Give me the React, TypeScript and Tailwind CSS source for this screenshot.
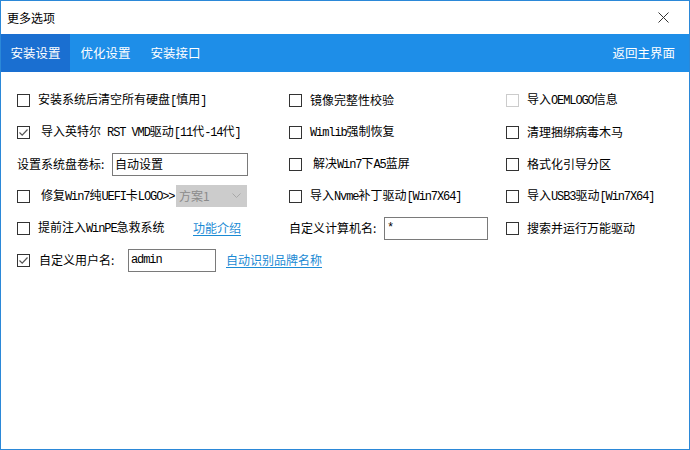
import type { ReactNode } from "react";

const FONT = "font-['Noto_Sans_CJK_SC','Noto_Sans',sans-serif]";

// latin runs in the original are half-width bitmap glyphs, ~6px per char
function T({ text }: { text: string }) {
  const parts = text.split(/([\x20-\x7E]+)/);
  return (
    <>
      {parts.map((p, i) =>
        /^[\x20-\x7E]+$/.test(p) ? (
          <span key={i} className="whitespace-pre font-['Liberation_Mono',monospace] text-[12px] tracking-[-1.1px]">
            {p}
          </span>
        ) : (
          <span key={i}>{p}</span>
        ),
      )}
    </>
  );
}

function Box({ checked = false, disabled = false }: { checked?: boolean; disabled?: boolean }) {
  return (
    <span
      className={`flex h-[13px] w-[13px] shrink-0 items-center justify-center border bg-white ${
        disabled ? "border-[#cccccc]" : "border-[#333333]"
      }`}
    >
      {checked && (
        <svg width="11" height="11" viewBox="0 0 11 11">
          <path d="M1.5 5.5 L4.2 8.2 L9.5 2.5" fill="none" stroke="#555" strokeWidth="1.2" />
        </svg>
      )}
    </span>
  );
}

function Check({
  label,
  checked,
  disabled,
  gap = "ml-2",
}: {
  label: string;
  checked?: boolean;
  disabled?: boolean;
  gap?: string;
}) {
  return (
    <div className="flex items-center">
      <Box checked={checked} disabled={disabled} />
      <span className={`${gap} whitespace-nowrap`}>
        <T text={label} />
      </span>
    </div>
  );
}

function Row({ a, b, c }: { a: ReactNode; b?: ReactNode; c?: ReactNode }) {
  return (
    <div className="flex h-8 items-center">
      <div className="flex w-[272px] shrink-0 items-center">{a}</div>
      <div className="flex w-[217px] shrink-0 items-center">{b}</div>
      <div className="flex items-center">{c}</div>
    </div>
  );
}

function Field({ value, width }: { value: string; width: string }) {
  return (
    <div className={`flex h-[23px] ${width} items-center border border-[#7a7a7a] bg-white px-[2px] text-[12px] text-black`}>
      <T text={value} />
    </div>
  );
}

export default function App() {
  return (
    <div className={`flex h-[450px] w-[690px] flex-col border border-[#2b88d8] bg-white text-black ${FONT}`}>
      <div className="flex h-[33px] shrink-0 items-center justify-between pl-[6px] pr-[20px] text-[12px]">
        <span>更多选项</span>
        <svg width="11" height="11" viewBox="0 0 11 11">
          <path d="M0.5 0.5 L10.5 10.5 M10.5 0.5 L0.5 10.5" stroke="#333" strokeWidth="1" />
        </svg>
      </div>

      <div className="flex h-[38px] shrink-0 items-stretch bg-[#1e8ee8] text-[12.5px] text-white">
        <div className="flex w-[69px] items-center justify-center bg-[#1a6fd1]">安装设置</div>
        <div className="flex w-[71px] items-center justify-center">优化设置</div>
        <div className="flex w-[69px] items-center justify-center">安装接口</div>
        <div className="ml-auto flex items-center pr-[14px]">返回主界面</div>
      </div>

      <div className="flex flex-col pl-4 pt-3 text-[12px]">
        <Row
          a={<Check label="安装系统后清空所有硬盘[慎用]" />}
          b={<Check label="镜像完整性校验" />}
          c={<Check label="导入OEMLOGO信息" disabled />}
        />
        <Row
          a={<Check label="导入英特尔 RST VMD驱动[11代-14代]" checked gap="ml-[11px]" />}
          b={<Check label="Wimlib强制恢复" />}
          c={<Check label="清理捆绑病毒木马" />}
        />
        <Row
          a={
            <>
              <span className="w-[95px] whitespace-nowrap">设置系统盘卷标:</span>
              <Field value="自动设置" width="w-[136px]" />
            </>
          }
          b={<Check label="解决Win7下A5蓝屏" gap="ml-[11px]" />}
          c={<Check label="格式化引导分区" />}
        />
        <Row
          a={
            <>
              <Box />
              <span className="ml-[11px] w-[135px] whitespace-nowrap">
                <T text="修复Win7纯UEFI卡LOGO>>" />
              </span>
              <div className="flex h-[22px] w-[71px] items-center justify-between bg-[#cccccc] pl-[3px] pr-[6px] text-[#8a8a8a]">
                <span>方案1</span>
                <svg width="9" height="6" viewBox="0 0 9 6">
                  <path d="M0.5 0.5 L4.5 4.5 L8.5 0.5" fill="none" stroke="#a8a8a8" strokeWidth="1" />
                </svg>
              </div>
            </>
          }
          b={<Check label="导入Nvme补丁驱动[Win7X64]" />}
          c={<Check label="导入USB3驱动[Win7X64]" />}
        />
        <Row
          a={
            <>
              <Box />
              <span className="ml-2 w-[155px] whitespace-nowrap">
                <T text="提前注入WinPE急救系统" />
              </span>
              <span className="text-[#1a8ad4] underline underline-offset-2">功能介绍</span>
            </>
          }
          b={
            <>
              <span className="w-[95px] whitespace-nowrap">自定义计算机名:</span>
              <Field value="*" width="w-[104px]" />
            </>
          }
          c={<Check label="搜索并运行万能驱动" />}
        />
        <div className="flex h-8 items-center">
          <Box checked />
          <span className="ml-[9px] w-[89px] whitespace-nowrap">自定义用户名:</span>
          <Field value="admin" width="w-[88px]" />
          <span className="ml-[10px] text-[#1a8ad4] underline underline-offset-2">自动识别品牌名称</span>
        </div>
      </div>
    </div>
  );
}
